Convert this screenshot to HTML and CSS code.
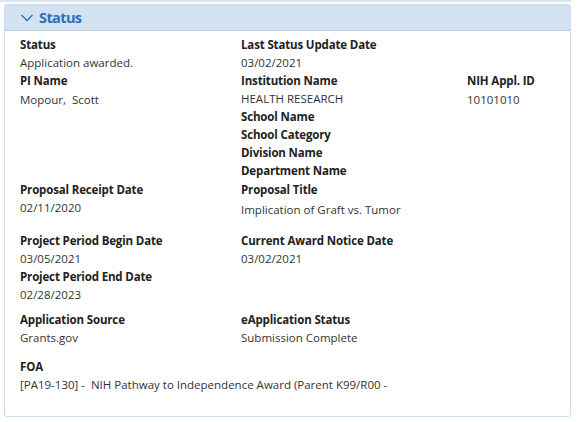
FILE: index.html
```html
<!DOCTYPE html>
<html>
<head>
<meta charset="utf-8">
<link rel="stylesheet" href="styles.css">
</head>
<body>
<div class="prev-edge"></div>
<section class="panel">
  <header class="panel-head">
    <svg class="chev" width="12" height="8" viewBox="0 0 12 8"><path d="M0.5 1 L6 6.5 L11.5 1" fill="none" stroke="#2f6fb7" stroke-width="1.3"/></svg>
    <span class="panel-title">Status</span>
  </header>
  <div class="panel-body">
    <div class="row r1">
      <div class="field"><div class="lbl">Status</div><div class="val">Application awarded.</div></div>
      <div class="field"><div class="lbl">Last Status Update Date</div><div class="val">03/02/2021</div></div>
      <div></div>
    </div>
    <div class="row r2">
      <div class="field"><div class="lbl">PI Name</div><div class="val low">Mopour,&nbsp; Scott</div></div>
      <div class="field">
        <div class="lbl">Institution Name</div><div class="val">HEALTH RESEARCH</div>
        <div class="lbl">School Name</div>
        <div class="lbl">School Category</div>
        <div class="lbl">Division Name</div>
        <div class="lbl">Department Name</div>
      </div>
      <div class="field"><div class="lbl">NIH Appl. ID</div><div class="val low">10101010</div></div>
    </div>
    <div class="row r3">
      <div class="field"><div class="lbl">Proposal Receipt Date</div><div class="val">02/11/2020</div></div>
      <div class="field"><div class="lbl">Proposal Title</div><div class="val low2">Implication of Graft vs. Tumor</div></div>
      <div></div>
    </div>
    <div class="row r4">
      <div class="field">
        <div class="lbl">Project Period Begin Date</div><div class="val">03/05/2021</div>
        <div class="lbl">Project Period End Date</div><div class="val">02/28/2023</div>
      </div>
      <div class="field"><div class="lbl">Current Award Notice Date</div><div class="val">03/02/2021</div></div>
      <div></div>
    </div>
    <div class="row r5">
      <div class="field"><div class="lbl">Application Source</div><div class="val">Grants.gov</div></div>
      <div class="field"><div class="lbl">eApplication Status</div><div class="val">Submission Complete</div></div>
      <div></div>
    </div>
    <div class="row r6 full">
      <div class="field"><div class="lbl">FOA</div><div class="val">[PA19-130] -&nbsp; NIH Pathway to Independence Award (Parent K99/R00 -</div></div>
    </div>
  </div>
</section>
</body>
</html>
```
FILE: styles.css
```css
html, body {
  margin: 0;
  padding: 0;
  background: #ffffff;
}
body {
  font-family: "Open Sans", "Noto Sans", "Liberation Sans", sans-serif;
  font-size: 11.5px;
  color: #333333;
}
.prev-edge {
  width: 571px;
  height: 2px;
  background: #dce7f3;
}
.panel {
  margin: 2px 0 0 4px;
  width: 565px;
  height: 411px;
  border: 1px solid #cddcec;
  border-radius: 3px;
  box-sizing: content-box;
}
.panel-head {
  height: 25px;
  background: #d3e2f1;
  border-bottom: 1px solid #bcd0e6;
  display: flex;
  align-items: center;
  padding-left: 16px;
}
.chev {
  display: block;
  margin-right: 6px;
  margin-top: 1px;
}
.panel-title {
  font-weight: 700;
  font-size: 14.5px;
  color: #2f6fb7;
  letter-spacing: -0.6px;
}
.panel-body {
  padding: 5px 0 0 15px;
}
.row {
  display: grid;
  grid-template-columns: 221px 226px 1fr;
}
.row.full {
  grid-template-columns: 1fr;
}
.lbl {
  font-weight: 700;
  color: #222222;
  line-height: 18px;
  height: 18px;
  letter-spacing: -0.15px;
  white-space: nowrap;
}
.val {
  line-height: 18px;
  height: 18px;
  color: #333333;
  white-space: nowrap;
}
.val.low { padding-top: 1px; }
.val.low2 { padding-top: 2px; }
.r3 { margin-top: 1px; }
.r4 { margin-top: 13px; }
.r5 { margin-top: 7px; }
.r6 { margin-top: 11px; }
```
